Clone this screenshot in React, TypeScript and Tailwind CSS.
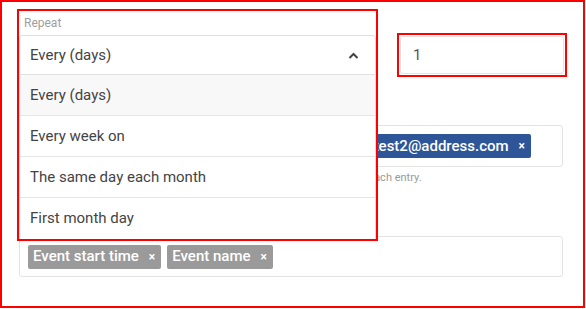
import React from 'react';

const Tag = ({ label, color }: { label: string; color: string }) => (
  <span
    className={`inline-flex items-center h-6 pl-[5px] pr-[6px] rounded-[2px] text-white text-[15px] font-medium whitespace-nowrap ${color}`}
  >
    {label}
    <span className="ml-[10px] text-[12px] font-bold leading-none">×</span>
  </span>
);

const App = () => {
  const options = ['Every (days)', 'Every week on', 'The same day each month', 'First month day'];

  return (
    <div className="w-[586px] h-[309px] bg-white font-['Roboto',sans-serif]">
      <div className="w-[585px] h-[308px] border-2 border-[#ff0000]">
        {/* Top row */}
        <div className="flex items-start pt-[7px] pl-[15px]">
          <div className="relative w-[361px] h-[68px] shrink-0">
            {/* Open select, highlighted */}
            <div className="absolute top-0 left-0 z-10 w-[361px] border-2 border-[#ff0000] bg-white">
              <div className="h-[24px] pl-[5px] text-[12px] leading-[24px] text-[#9e9e9e]">Repeat</div>
              <div className="h-[40px] flex items-center justify-between pl-[10px] pr-[16px] border border-[#e0e0e0] rounded-t-[3px] text-[15px] text-[#444]">
                <span>Every (days)</span>
                <svg width="11" height="7" viewBox="0 0 11 7" fill="none">
                  <path d="M1.5 6L5.5 2L9.5 6" stroke="#444" strokeWidth="2" />
                </svg>
              </div>
              <ul className="border-x border-[#e0e0e0]">
                {options.map((o, i) => (
                  <li
                    key={o}
                    className={`h-[41px] flex items-center pl-[10px] text-[15px] text-[#444] ${
                      i === 0 ? 'bg-[#f8f8f8]' : 'bg-white'
                    } ${i < options.length - 1 ? 'border-b border-[#e5e5e5]' : ''}`}
                  >
                    {o}
                  </li>
                ))}
              </ul>
            </div>
          </div>

          <div className="ml-[19px] mt-[24px] w-[170px] h-[44px] border-2 border-[#ff0000] p-[1px]">
            <div className="h-full border border-[#e3e3e3] rounded-[3px] flex items-center pl-[12px] text-[15px] text-[#555]">
              1
            </div>
          </div>
        </div>

        {/* Fields below */}
        <div className="pl-[17px] pr-[20px]">
          <div className="mt-[23px] h-[18px] text-[12px] text-[#9e9e9e]">Send to</div>
          <div className="mt-[7px] h-[42px] border border-[#e3e3e3] rounded-[3px] flex items-center gap-[8px] px-[8px]">
            <Tag label="test0@address.com" color="bg-[#2d5597]" />
            <Tag label="test1@address.com" color="bg-[#2d5597]" />
            <Tag label="test2@address.com" color="bg-[#2d5597]" />
          </div>
          <p className="mt-[4px] text-[11px] leading-[14px] text-[#9a9a9a] whitespace-nowrap">
            Enter the email addresses to receive notifications, and press enter after each entry.
          </p>
          <div className="mt-[20px] h-[18px] text-[12px] text-[#9e9e9e]">Subject</div>
          <div className="mt-[13px] h-[41px] border border-[#e3e3e3] rounded-[3px] flex items-center gap-[6px] px-[8px]">
            <Tag label="Event start time" color="bg-[#9a9a9a]" />
            <Tag label="Event name" color="bg-[#9a9a9a]" />
          </div>
        </div>
      </div>
    </div>
  );
};

export default App;
